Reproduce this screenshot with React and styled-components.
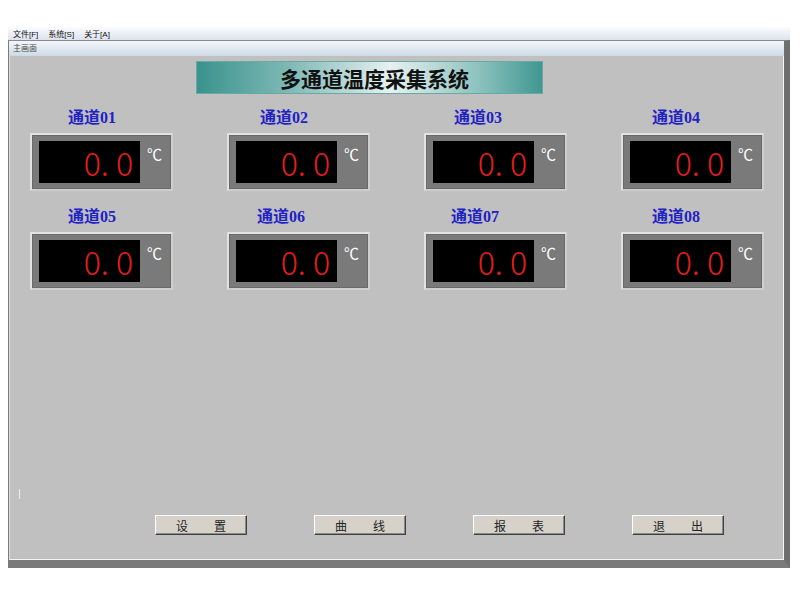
import React from 'react';
import styled, { createGlobalStyle } from 'styled-components';

const GlobalStyle = createGlobalStyle`
    body {
        margin: 0;
        background: #ffffff;
        font-family: "Liberation Sans", "Noto Sans CJK SC", sans-serif;
    }
`;

const channels = [
    { id: '01', indent: 38 },
    { id: '02', indent: 33 },
    { id: '03', indent: 30 },
    { id: '04', indent: 31 },
    { id: '05', indent: 38 },
    { id: '06', indent: 30 },
    { id: '07', indent: 27 },
    { id: '08', indent: 31 },
];

const buttons = [['设', '置'], ['曲', '线'], ['报', '表'], ['退', '出']];

function App() {
    return (
        <Frame>
            <GlobalStyle />
            <MenuBar>
                <span>文件[F]</span>
                <span>系统[S]</span>
                <span>关于[A]</span>
            </MenuBar>
            <Window>
                <TitleBar>主画面</TitleBar>
                <Content>
                    <Banner>多通道温度采集系统</Banner>
                    <ChannelGrid>
                        {channels.map(ch => (
                            <Channel key={ch.id}>
                                <Label $indent={ch.indent}>通道{ch.id}</Label>
                                <Meter>
                                    <Display>0. 0</Display>
                                    <Unit>℃</Unit>
                                </Meter>
                            </Channel>
                        ))}
                    </ChannelGrid>
                    <Caret />
                    <ButtonRow>
                        {buttons.map(([a, b]) => (
                            <Button key={a}>
                                <span>{a}</span>
                                <span>{b}</span>
                            </Button>
                        ))}
                    </ButtonRow>
                </Content>
            </Window>
        </Frame>
    );
}

export default App;

const Frame = styled.div`
    margin: 27px 0 0 8px;
    width: 782px;
`;

const MenuBar = styled.div`
    height: 13px;
    display: flex;
    align-items: center;
    gap: 10px;
    padding-left: 5px;
    font-size: 8px;
    color: #111;
    background: linear-gradient(#fbfcfe, #dde2ef);
`;

const Window = styled.div`
    border-top: 1px solid #8a8a8a;
    border-left: 1px solid #7c7c7c;
    border-right: 6px solid #6f6f6f;
    border-bottom: 8px solid #7a7a7a;
`;

const TitleBar = styled.div`
    height: 15px;
    line-height: 15px;
    padding-left: 4px;
    font-size: 8px;
    color: #4a4a4a;
    background: linear-gradient(#f3f7fb, #cddae6);
`;

const Content = styled.div`
    height: 504px;
    display: flex;
    flex-direction: column;
    align-items: flex-start;
    padding: 5px 0 24px 0;
    box-sizing: border-box;
    background: #c0c0c0;
    border-left: 1px solid #dcdcdc;
    border-right: 1px solid #f4f4f4;
    border-bottom: 1px solid #f4f4f4;
`;

const Banner = styled.div`
    margin-left: 186px;
    width: 347px;
    height: 33px;
    box-sizing: border-box;
    border: 1px solid #6aa8a4;
    background: linear-gradient(90deg, #3a928d 0%, #82bbb7 28%, #e6f1f0 56%, #8cc1bd 82%, #3f9792 100%);
    display: flex;
    align-items: center;
    justify-content: center;
    padding-left: 10px;
    font-family: "Noto Sans CJK SC", sans-serif;
    font-weight: 700;
    font-size: 21px;
    color: #111;
`;

const ChannelGrid = styled.div`
    display: grid;
    grid-template-columns: repeat(4, 143px);
    column-gap: 54px;
    row-gap: 17px;
    padding-left: 20px;
    margin-top: 15px;
`;

const Channel = styled.div`
    display: flex;
    flex-direction: column;
`;

const Label = styled.div`
    height: 18px;
    line-height: 18px;
    margin-bottom: 6px;
    padding-left: ${p => p.$indent}px;
    font-family: "Liberation Serif", "Noto Sans CJK SC", serif;
    font-weight: 700;
    font-size: 16px;
    color: #2222c4;
`;

const Meter = styled.div`
    width: 143px;
    height: 58px;
    box-sizing: border-box;
    display: flex;
    align-items: flex-start;
    padding: 6px 0 0 7px;
    background: #7a7a7a;
    border: 2px solid;
    border-color: #e2e2e2 #cfcfcf #cfcfcf #e2e2e2;
    box-shadow: inset 0 0 0 1px #6a6a6a;
`;

const Display = styled.div`
    width: 101px;
    height: 42px;
    box-sizing: border-box;
    padding-right: 7px;
    background: #000;
    color: #e41e1e;
    text-align: right;
    font-family: "Noto Sans CJK SC", sans-serif;
    font-weight: 200;
    font-size: 32px;
    line-height: 42px;
    white-space: pre;
`;

const Unit = styled.div`
    margin: 2px 0 0 7px;
    font-family: "Noto Sans CJK SC", sans-serif;
    font-size: 15px;
    color: #ffffff;
`;

const Caret = styled.div`
    margin: auto 0 16px 9px;
    width: 1px;
    height: 10px;
    background: #ececec;
`;

const ButtonRow = styled.div`
    display: flex;
    gap: 67px;
    padding-left: 145px;
`;

const Button = styled.div`
    width: 92px;
    height: 20px;
    box-sizing: border-box;
    display: flex;
    align-items: center;
    justify-content: space-between;
    padding: 0 20px;
    background: #d6d2ca;
    border: 1px solid;
    border-color: #ffffff #404040 #404040 #ffffff;
    box-shadow: inset -1px -1px 0 #8a8a8a;
    font-family: "Noto Sans CJK SC", sans-serif;
    font-size: 12px;
    color: #222;
`;
